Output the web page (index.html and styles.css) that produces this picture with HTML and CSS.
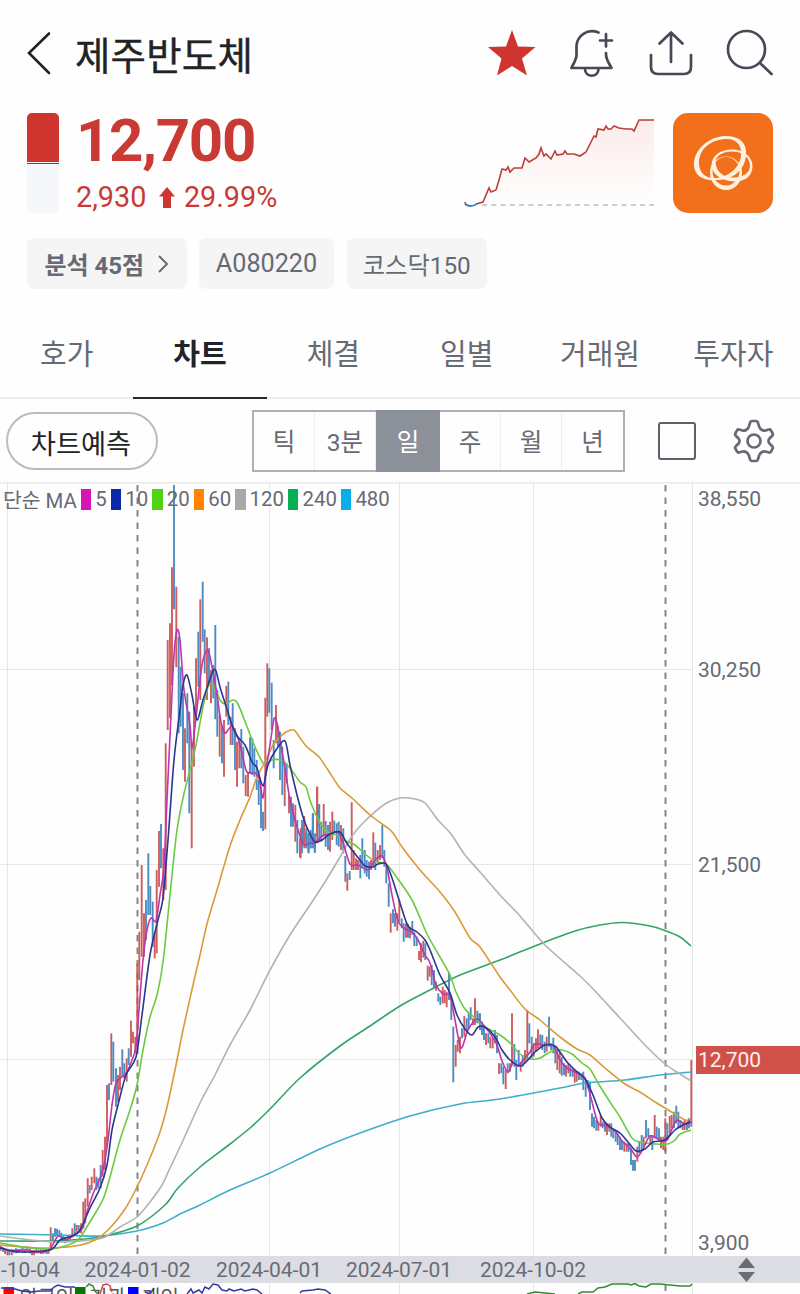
FILE: index.html
```html
<!DOCTYPE html>
<html lang="ko">
<head>
    <meta charset="UTF-8">
    <meta name="viewport" content="width=device-width, initial-scale=1.0">
    <title>제주반도체</title>
    <link rel="stylesheet" href="styles.css">
</head>
<body>
    <header class="topbar">
        <svg class="back" width="24" height="44" viewBox="0 0 24 44"><path d="M22 2.500 2 22 22 42"/></svg>
        <h1>제주반도체</h1>
        <svg class="star" width="50" height="48" viewBox="0 0 50 48"><path d="M25 1 31 17.500 48.500 18 35 29.500 40 46.500 25 37 10 46.500 14.500 29.500 1 18 19 17.500Z"/></svg>
        <svg class="icon bell" width="46" height="50" viewBox="0 0 46 50">
            <path d="M29.500 4.500C18 0 8 8 7.500 18V27C7.500 32 4 36 2.500 40H42.500C40.500 36 37 32 37 26V25"/>
            <path d="M16 41C16 50 29.500 50 29.500 41M37 6V18.500M31 12.500H43"/>
        </svg>
        <svg class="icon" width="44" height="48" viewBox="0 0 44 48">
            <path d="M2 26V38Q2 45 9 45H35Q42 45 42 38V26M22 33V4M10.500 14.500 22 3.500 33.500 14.500"/>
        </svg>
        <svg class="icon search" width="48" height="48" viewBox="0 0 48 48"><circle cx="20.500" cy="20.500" r="18.500"/><path d="M34 34 45.500 45"/></svg>
    </header>

    <section class="quote">
        <div class="day-range"><div class="up"></div></div>
        <div class="price">
            <strong>12,700</strong>
            <p><span>2,930</span><svg width="16" height="21" viewBox="0 0 16 21"><path d="M8 0 16 9.500H12V21H4V9.500H0Z"/></svg><span>29.99%</span></p>
        </div>
        <svg class="mini" width="190" height="92" viewBox="464 118 190 92">
            <defs>
                <linearGradient id="fade" x1="0" y1="0" x2="0" y2="1">
                    <stop offset="0" stop-color="#fbecea"/>
                    <stop offset="1" stop-color="#fefefe"/>
                </linearGradient>
            </defs>
            <path fill="url(#fade)" d="M482 203 489 189 496 190 503 168 522 168 525 159 540 150 547 156 560 153 585 154 594 136 600 128 634 129 640 120H654V204H482Z"/>
            <path class="base" d="M482 205H654"/>
            <path class="rise" d="M465 202 466 205 M476 204 483 202 486 195 489 188 491 192 496 190 499 180 502 169 506 170 508 167 510 172 514 168 522 168 525 158 529 162 536 158 539 154 541 148 544 156 546 154 551 159 555 151 557 155 563 154 565 151 567 154 574 154 580 156 586 152 590 144 594 136 596 137 598 129 604 130 606 126 608 129 611 129 614 126 619 128 626 129 632 129 634 131 639 120 654 120"/>
            <path class="fall" d="M465 204Q470 208 477 204"/>
        </svg>
        <div class="logo">
            <svg width="60" height="56" viewBox="0 0 60 56">
                <path fill-rule="evenodd" d="M1 31C0 15 15 2 32 1C47 1 54 8 53 20C52 35 40 45 24 45C10 46 2 41 1 31ZM6 28C6 39 14 44 24 43C36 41 47 33 48 20C49 11 44 4 34 4C19 4 6 13 6 28Z"/>
                <path fill-rule="evenodd" d="M18.500 30C19 20 28 14.500 39 14.500C51 14.500 59.500 22 59.500 31C59.500 42 51 46.500 41 46.500C29 46 18.500 39 18.500 30ZM22.500 27C23 37 31 43 41 42.500C50 42 57 38 57 31C57 22 49 16.500 39 16.500C30 16.500 22.500 21 22.500 27Z"/>
                <path fill-rule="evenodd" d="M17 38A16 16.500 0 0 1 49 38A16 17 0 0 1 17 38ZM19.500 36A13.500 14.500 0 0 0 46.500 36A13.500 14 0 0 0 19.500 36Z"/>
            </svg>
        </div>
    </section>

    <div class="chips">
        <a class="chip score">분석 45점<svg width="12" height="18" viewBox="0 0 12 18"><path d="M2 1 10 9 2 17"/></svg></a>
        <span class="chip code">A080220</span>
        <span class="chip index">코스닥150</span>
    </div>

    <nav class="tabs">
        <a>호가</a>
        <a class="on">차트</a>
        <a>체결</a>
        <a>일별</a>
        <a>거래원</a>
        <a>투자자</a>
    </nav>

    <div class="toolbar">
        <button class="forecast">차트예측</button>
        <div class="period">
            <span>틱</span>
            <span>3분</span>
            <span class="on">일</span>
            <span>주</span>
            <span>월</span>
            <span>년</span>
        </div>
        <div class="square"></div>
        <svg class="gear" width="42" height="44" viewBox="0 0 42 44">
            <path d="M17.300 3Q17.800 2 18.800 2H23.200Q24.200 2 24.700 3L26.300 8Q27 9.800 29 11Q30.700 12 32.500 11.500L36 10.500Q37.200 10.200 37.800 11.200L39.700 14.500Q40.200 15.500 39.400 16.500L36.500 19.500Q35.500 20.500 35.500 22Q35.500 23.500 36.500 24.500L39.400 27.500Q40.200 28.500 39.700 29.500L37.800 32.800Q37.200 33.800 36 33.500L32.500 32.500Q30.700 32 29 33Q27 34.200 26.300 36L24.700 41Q24.200 42 23.200 42H18.800Q17.800 42 17.300 41L15.700 36Q15 34.200 13 33Q11.300 32 9.500 32.500L6 33.500Q4.800 33.800 4.200 32.800L2.300 29.500Q1.800 28.500 2.600 27.500L5.500 24.500Q6.500 23.500 6.500 22Q6.500 20.500 5.500 19.500L2.600 16.500Q1.800 15.500 2.300 14.500L4.200 11.200Q4.800 10.200 6 10.500L9.500 11.500Q11.300 12 13 11Q15 9.800 15.700 8Z"/>
            <circle cx="21" cy="22" r="6.500"/>
        </svg>
    </div>

    <main class="chart">
        <svg width="800" height="772" viewBox="0 484 800 772">
            <path class="grid" d="M7.500 484V1256M269.500 484V1256M399.500 484V1256M533.500 484V1256M692.500 484V1256M0 669.500H692M0 864.500H692M0 1059.500H692"/>
            <path class="year" d="M137.500 485V1256M665.500 485V1256"/>
            <g id="candles"></g>
            <g id="averages"></g>
            <g class="scale">
                <text x="698" y="506">38,550</text>
                <text x="698" y="677">30,250</text>
                <text x="698" y="872">21,500</text>
                <text x="698" y="1249.500">3,900</text>
                <rect x="696" y="1046" width="104" height="28"/>
                <text class="now" x="698" y="1067">12,700</text>
            </g>
        </svg>
        <div class="legend">
            <span>단순 MA</span>
            <i class="ma5"></i><span>5</span>
            <i class="ma10"></i><span>10</span>
            <i class="ma20"></i><span>20</span>
            <i class="ma60"></i><span>60</span>
            <i class="ma120"></i><span>120</span>
            <i class="ma240"></i><span>240</span>
            <i class="ma480"></i><span>480</span>
        </div>
    </main>

    <svg class="dates" width="800" height="27" viewBox="0 1256 800 27">
        <text x="1" y="1276.500">-10-04</text>
        <text x="84.500" y="1276.500">2024-01-02</text>
        <text x="216" y="1276.500">2024-04-01</text>
        <text x="346" y="1276.500">2024-07-01</text>
        <text x="480" y="1276.500">2024-10-02</text>
        <path d="M738 1268 746.500 1257.500 755 1268ZM738 1272H755L746.500 1282Z"/>
    </svg>

    <!-- 투자자별 순매수: only the top edge fits on the first screen -->
    <svg class="investors" width="800" height="11" viewBox="0 1283 800 11">
        <path class="grid" d="M7.500 1283V1294M269.500 1283V1294M399.500 1283V1294M533.500 1283V1294M692.500 1283V1294"/>
        <path class="year" d="M665.500 1285V1291"/>
        <rect x="3.500" y="1287" width="10.500" height="20" fill="#ff0000"/>
        <text x="19" y="1305">외국인</text>
        <rect x="75" y="1287" width="10.500" height="20" fill="#007a00"/>
        <text x="89" y="1305">기관</text>
        <rect x="128" y="1287" width="10.500" height="20" fill="#0000ff"/>
        <text x="142" y="1305">개인</text>
        <path class="person" d="M1 1288 8 1288 15 1289 22 1291 30 1292 40 1291 50 1291 54 1287 58 1285 65 1287 75 1287M187 1294 191 1289 193 1293 199 1290 202 1293 205 1287 209 1289 213 1284 218 1285 222 1290 227 1291 229 1289 234 1291 241 1289 245 1291 253 1289 257 1290 262 1294M300 1293 302 1291 313 1290 318 1289 325 1290 331 1294M145 1292 150 1294 154 1288"/>
        <path class="organ" d="M86 1287 89 1284 93 1286 95 1291 98 1294M527 1294 535 1292 555 1294M578 1294 582 1292 593 1292 598 1288 605 1287 612 1284 628 1284 631 1285 635 1283.500 639 1286 646 1287 651 1284 660 1284 680 1286 690 1286 692 1284"/>
        <path class="foreign" d="M100 1294 103 1285 107 1284 110 1286 112 1292"/>
    </svg>

    <script src="chart.js"></script>
</body>
</html>
```
FILE: chart.js
```js
var NS = 'http://www.w3.org/2000/svg';

// Daily bars in blocks. Each bar: r (up) or b (down), x, high, low
// in thirds of a pixel from the block's origin
var blocks = [
    { x: 0, y: 840, bars: 'r2 1218 1232,b9 1222 1236,r15 1226 1242,r22 1229 1246,b28 1230 1246,r35 1228 1246,b41 1228 1240,b48 1225 1240,b54 1227 1238,b61 1226 1236,b68 1222 1234,r75 1226 1235,b82 1218 1232,b90 1226 1240,r96 1232 1246,r102 1230 1246,b109 1226 1240,r115 1229 1240,b122 1228 1242,r128 1230 1242,r134 1229 1240,b140 1233 1242,r146 1228 1241,r152 1162 1230,b159 1180 1200,b165 1165 1190,b171 1166 1187,b178 1170 1190,b184 1178 1196,b190 1188 1206,b196 1190 1210,b203 1188 1202,r210 1184 1198,r217 1165 1192,b224 1150 1182,r230 1155 1175,b236 1155 1170,r243 1150 1180,r250 1085 1165,r256 1075 1150,r263 1015 1100,b269 1035 1060,r275 1010 1050,r283 985 1030,b289 1010 1050,b295 1015 1045,b302 975 1045,r308 930 1010,r315 890 990,r321 735 920,b327 730 780,r334 580 735,b340 605 725,b348 685 800,r354 705 785,r360 680 750,b367 628 710,b373 670 715,r380 655 725,b386 625 675,r393 542 650,r399 575 610,r406 590 640,r412 370 620,r418 275 420,r425 75 350,r432 220 350,b438 180 300,b445 40 225,b451 138 225,b458 185 320,r464 280 355,r470 90 340,r477 -27 140,b483 -48 85,r490 25 180' },
    { x: 120, y: 530, bars: 'r137 640 1080,r143 330 600,r150 280 565,r156 112 465,b162 -135 238,r169 170 412,b176 320 610,b182 410 590,b189 490 720,r195 595 755,b202 490 640,b208 545 850,r215 640 955,r222 530 710,r228 385 565,b235 305 470,r241 208 510,b248 155 335,b254 298 430,r261 322 510,b267 355 460,r273 420 520,b280 405 505,b286 285 568,b292 480 620,r299 555 680,b306 590 700,r312 570 740,r319 468 560,b325 455 585,r332 560 645,b338 520 645,b345 595 720,r351 635 770,r358 630 715,b364 597 715,b370 650 760,r377 735 798,r384 725 800,b390 622 730,b397 625 735,b403 655 740,b410 690 780,b416 750 825,b423 770 895,b429 845 903,r436 503 898,r442 400 560,b448 415 548,b455 458 600,b461 630 715,r468 525 640,b474 590 650,b480 605 750,b487 650 795,r494 695 828,b500 700 760,r507 795 850,b513 800 890,b519 820 890,r526 825 935,b532 870 970,r540 925 982,b546 890 970,r552 858 940,b559 905 950,b565 910 968,b572 900 955,b578 850 940,b584 925 968,r591 770 920,b597 823 890' },
    { x: 300, y: 770, bars: 'r2 175 265,b6 150 230,r13 140 235,b19 175 235,b26 190 250,b32 185 235,b39 130 235,b45 190 248,r52 50 220,b58 103 210,b64 155 215,r71 102 200,b77 153 230,b84 165 240,r90 155 245,r97 125 210,b103 152 190,b110 160 225,b116 155 230,r123 165 240,b130 175 250,b136 258 335,r142 310 362,b149 303 330,r155 97 300,r161 240 300,r168 265 300,r174 270 300,b181 255 325,b187 205 295,b194 240 310,b200 270 320,b207 275 328,r213 270 300,r220 187 290,b226 218 300,r233 240 280,r240 225 270,b247 165 265,b253 240 290,b259 285 340,b266 340 410,r272 430 488,b279 418 460,b285 430 470,r292 430 482,r298 390 455,b305 445 475,b311 460 515,r318 460 503,b324 462 503,r330 470 505,b337 453 495,b343 485 528,b350 500 528,r357 543 570,r363 520 577,r370 513 563,b376 520 570,r383 587 632,r389 590 620,b395 585 645,b402 600 655,r408 635 662,b415 670 695,b421 680 705,r428 650 700,r434 660 700,r440 665 712,b447 607 690,b454 680 750,b460 770 937,r467 825 890,r473 810 845,r480 800 850,b486 775 805,r493 738 800,b500 745 780,b506 730 775,b512 712 750,r519 745 765,r525 685 765,b532 722 760,b538 730 760' },
    { x: 480, y: 900, bars: 'b0 340 390,b6 365 405,b12 380 420,r18 400 435,b25 400 430,r31 410 445,r38 415 445,b45 390 430,b51 405 460,r57 490 522,b64 490 520,b70 500 553,r77 510 567,b83 490 520,r90 490 515,r96 340 495,b103 432 500,b109 480 540,b116 450 500,r122 485 515,b128 465 500,r135 450 490,r142 330 480,b148 370 430,b155 410 475,r161 430 470,r168 415 455,r174 388 445,b181 403 440,b187 405 450,b194 425 460,r200 410 455,b207 350 440,b213 435 450,b220 413 460,b226 440 490,r232 450 510,r239 455 520,b245 470 527,b252 490 525,r258 495 530,r265 490 520,b271 500 530,b278 505 530,r284 510 548,r290 515 545,b297 515 540,b304 520 540,b310 515 570,b317 540 590,b323 540 565,b330 545 630,b336 640 680,b342 650 685,b349 660 692,r355 665 692,r362 647 680,b368 665 685,b375 665 695,r381 670 705,r388 670 695,b394 670 710,b400 690 715,b407 690 725,b413 700 735,b420 710 750,b426 720 750,r433 725 755,r440 730 755,b446 730 755,b453 745 795,b459 780 812,b465 780 812,r472 740 785,b478 725 760,b485 705 750,r491 710 740,b498 660 715,b505 685 710,r511 705 735,b517 705 750,r524 645 715,b530 680 715,b537 685 720,r543 710 745,r550 710 750,r556 655 755,b562 670 720,r569 648 700,r575 645 685,b582 635 685,b589 617 670,b595 635 685,b601 660 685,r608 665 690,r614 660 690,b621 665 690,b627 655 685,r634 480 680' }
];

// Moving averages, x,y points of the chart
var averages = {
    ma480: '0,1234 60,1235 100,1236 137,1231 163,1223 180,1214 200,1205 230,1190 270,1173 320,1149 360,1133 410,1116 460,1104 500,1099 560,1088 585,1083 625,1080 660,1075 691,1072',
    ma240: '0,1241 50,1241 85,1239 105,1236 137,1226 165,1205 178,1188 200,1167 230,1144 250,1128 270,1109 300,1078 340,1046 370,1026 400,1006 430,990 460,975 500,960 540,944 575,931 600,925 622,922.5 650,926 666,931 680,937 691,946',
    ma120: '0,1236 30,1240 60,1242 90,1240 105,1237 120,1227 137,1217 150,1202 162,1185 170,1168 180,1147 200,1103 215,1075 230,1045 250,1010 270,970 290,935 310,905 325,882 340,857 352,836 365,821 385,804 400,798 415,799 425,803 438,820 451,834 465,855 480,872 500,895 520,916 545,945 580,976 595,991 620,1018 645,1045 665,1064 680,1074 691,1081',
    ma60: '0,1245 40,1248 75,1246 95,1240 110,1228 125,1209 137,1187 150,1158 160,1132 167,1107 175,1070 183,1030 193,985 200,955 207,924 217,890 230,846 240,820 250,797 257,777 265,762 273,745 280,737 286,732 294,730 300,738 307,747 319,757 328,770 340,788 352,798 370,815 385,826 393,833 402,847 420,870 440,892 455,912 470,938 480,947 500,977 510,990 525,1009 540,1020 560,1037 577,1049 590,1055 605,1068 625,1084 640,1092 655,1102 670,1111 685,1120 691,1119',
    ma20: '0,1243 30,1248 50,1249 65,1246 78,1240 88,1225 96,1212 104,1197 110,1177 120,1140 130,1110 137,1085 143,1050 150,1017 157,995 163,962 168,915 172,875 177,830 183,798 190,770 196,745 203,707 209,685 215,688 220,700 225,704 233,700 238,704 246,724 255,747 264,764 272,760 280,760 290,768 300,782 306,787 311,803 320,823 328,832 340,836 346,841 355,845 365,854 375,861 386,864 395,875 412,900 427,934 440,957 450,975 456,992 465,1009 475,1018 485,1027 500,1035 510,1043 520,1054 530,1059 540,1058 552,1051 562,1050 572,1054 582,1063 590,1069 598,1083 610,1102 620,1117 632,1138 640,1142 655,1144 668,1144 675,1140 680,1134 691,1130',
    ma5: '0,1247 10,1251 25,1250 40,1252 50,1249 58,1236 65,1240 73,1236 82,1229 87,1212 93,1194 100,1178 104,1165 108,1140 112,1105 116,1083 122,1077 127,1072 132,1060 136,1047 139,1010 143,960 147,930 151,918 156,921 160,895 164,867 167,800 171,715 174,655 177,630 180,640 184,690 190,725 192,748 196,718 200,680 203,660 208,650 213,672 217,695 221,722 225,733 228,730 232,726 236,733 240,745 246,770 250,773 255,773 259,778 263,798 266,770 270,745 274,719 277,723 281,745 286,775 290,800 295,820 300,836 304,845 310,843 315,843 322,836 330,834 338,832 343,842 350,864 358,865 368,870 375,860 382,856 387,868 392,895 398,921 405,929 412,932 418,940 425,955 430,963 436,985 443,994 450,996 455,1020 461,1048 468,1030 477,1019 485,1027 492,1036 497,1045 502,1061 508,1072 513,1063 518,1066 525,1058 530,1052 535,1044 545,1045 553,1045 560,1060 567,1068 577,1073 585,1078 591,1098 598,1123 605,1125 615,1131 622,1141 630,1148 637,1157 643,1149 650,1136 660,1140 667,1140 672,1129 677,1120 685,1124 690,1120',
    ma10: '0,1248 20,1252 50,1250 60,1240 72,1236 80,1230 90,1208 100,1188 107,1165 112,1130 118,1105 126,1075 136,1057 142,1015 150,955 158,920 163,898 168,840 174,760 180,710 183,685 187,675 192,695 197,720 203,700 208,685 213,671 216,671 220,687 225,703 232,725 237,736 245,745 252,762 257,768 263,786 268,765 276,750 285,741 290,765 297,795 304,820 310,834 315,842 322,840 330,834 340,832 346,842 352,850 360,860 365,866 373,867 378,864 386,864 392,878 400,903 408,926 417,932 425,940 430,950 440,975 450,993 457,1015 465,1029 472,1035 478,1027 485,1027 495,1037 502,1050 510,1060 520,1066 526,1062 535,1052 545,1045 555,1046 560,1052 567,1062 575,1070 585,1079 593,1095 602,1118 610,1127 620,1133 628,1142 636,1151 645,1149 653,1142 665,1140 675,1130 683,1125 691,1122'
};

function addPath(parent, className, d) {
    var path = document.createElementNS(NS, 'path');
    path.setAttribute('class', className);
    path.setAttribute('d', d);
    document.getElementById(parent).appendChild(path);
}

blocks.forEach(function (block) {
    block.bars.split(',').forEach(function (bar) {
        var n = bar.slice(1).split(' ');
        var x = (block.x + n[0] / 3).toFixed(1);
        addPath('candles', bar[0] === 'r' ? 'up' : 'down',
            'M' + x + ' ' + (block.y + n[1] / 3).toFixed(1) + 'V' + (block.y + n[2] / 3).toFixed(1));
    });
});

// Smooth curve through all points
function curve(text) {
    var p = text.split(' ').map(function (s) { return s.split(',').map(Number); });
    var d = 'M' + p[0];
    for (var i = 0; i < p.length - 1; i++) {
        var a = p[i - 1] || p[i], b = p[i], c = p[i + 1], e = p[i + 2] || c;
        d += 'C' + (b[0] + (c[0] - a[0]) / 7) + ' ' + (b[1] + (c[1] - a[1]) / 7) + ' ' +
            (c[0] - (e[0] - b[0]) / 7) + ' ' + (c[1] - (e[1] - b[1]) / 7) + ' ' + c[0] + ' ' + c[1];
    }
    return d;
}

for (var name in averages) {
    addPath('averages', name, curve(averages[name]));
}
```
FILE: styles.css
```css
* {
    box-sizing: border-box;
}
body {
    margin: 0;
    width: 800px;
    height: 1294px;
    overflow: hidden;
    background-color: #fefefe;
    color: #666a73;
    font-family: Roboto, "Noto Sans CJK KR", sans-serif;
}
svg {
    display: block;
    flex: none;
}
h1, p {
    margin: 0;
}
.topbar {
    display: flex;
    align-items: center;
    height: 106px;
    padding: 0 26px 0 27px;
}
.topbar h1 {
    flex: 1;
    margin-left: 24px;
    padding-top: 8px;
    color: #222326;
    font-size: 38.5px;
    font-weight: 400;
    line-height: 60px;
    letter-spacing: 0.2px;
    -webkit-text-stroke: 0.4px #222326;
}
.back path {
    fill: none;
    stroke: #222326;
    stroke-width: 2.6;
    stroke-linecap: round;
}
.star {
    fill: #d0342f;
}
.icon {
    fill: none;
    stroke: #454a56;
    stroke-width: 2.7;
    stroke-linecap: round;
    stroke-linejoin: round;
    margin-left: 34px;
}
.bell {
    margin-left: 32px;
}
.search {
    margin-left: 33px;
}
.quote {
    display: flex;
    height: 108px;
    padding: 7px 27.5px 0 27px;
}
.day-range {
    width: 32px;
    height: 100px;
    border-radius: 5px;
    overflow: hidden;
    background-color: #f5f7fb;
}
.day-range .up {
    height: 51px;
    background: linear-gradient(#d0342f 49px, #fff 49px, #fff 50px, #a03034 50px);
}
.price {
    margin-left: 17px;
    width: 240px;
    color: #c93a34;
}
.price strong {
    display: block;
    margin-top: -2px;
    font-size: 60px;
    line-height: 60px;
    letter-spacing: -1.3px;
}
.price p {
    display: flex;
    align-items: center;
    margin-top: 8px;
    font-size: 28.8px;
    line-height: 36px;
}
.price p svg {
    margin: 0 8.5px 0 13px;
    fill: #d0342f;
}
.mini {
    margin: 5px 18.500px 0 auto;
    fill: none;
}
.base {
    stroke: #bcbcbc;
    stroke-width: 1.5;
    stroke-dasharray: 5 4.3;
}
.rise {
    stroke: #b8403c;
    stroke-width: 1.6;
}
.fall {
    stroke: #3d80c4;
    stroke-width: 2;
}
.logo {
    display: flex;
    align-items: center;
    justify-content: center;
    width: 100px;
    height: 100px;
    border-radius: 15px;
    background-color: #f2701b;
    fill: #fff1df;
}
.chips {
    display: flex;
    gap: 12.5px;
    padding: 24px 27px 0;
    height: 97px;
}
.chip {
    display: flex;
    align-items: center;
    justify-content: center;
    height: 51px;
    border-radius: 7px;
    background-color: #f5f5f5;
    font-size: 25.2px;
}
.score {
    width: 159.5px;
    gap: 13px;
    font-size: 24px;
    font-weight: 700;
}
.score svg {
    fill: none;
    stroke: #666a73;
    stroke-width: 2;
}
.code {
    width: 135px;
}
.index {
    width: 140.5px;
    font-size: 24.3px;
}
.tabs {
    display: flex;
    height: 88px;
    border-bottom: 2px solid #eceeef;
}
.tabs a {
    flex: 1;
    height: 88px;
    text-align: center;
    font-size: 29px;
    line-height: 89px;
}
.tabs .on {
    color: #222326;
    font-weight: 700;
    border-bottom: 2px solid #28292d;
}
.toolbar {
    display: flex;
    align-items: center;
    height: 85px;
    padding: 0 25px 0 6px;
    border-bottom: 2px solid #eceeef;
}
.forecast {
    width: 152px;
    height: 58px;
    padding: 2px 2px 0 0;
    border: 2px solid #bbbcbd;
    border-radius: 29px;
    background: none;
    color: #222326;
    font: 27.3px "Noto Sans CJK KR", sans-serif;
}
.period {
    display: flex;
    width: 373px;
    height: 62px;
    margin-left: 94px;
    border: 2px solid #aeb0b2;
}
.period span {
    width: 61px;
    border-right: 1px solid #eceeef;
    font-size: 24.5px;
    line-height: 62px;
    text-align: center;
}
.period span:last-child {
    border: 0;
}
.period .on {
    width: 64px;
    margin: -2px 0;
    line-height: 66px;
    background-color: #8c9099;
    border: 0;
    color: #fff;
}
.square {
    width: 38px;
    height: 38px;
    margin-left: 33px;
    border: 2.5px solid #5d616b;
    border-radius: 3px;
}
.gear {
    margin-left: 37px;
    fill: none;
    stroke: #666a73;
    stroke-width: 2.7;
}
.chart {
    position: relative;
    height: 772px;
}
.legend {
    position: absolute;
    top: 2px;
    left: 3px;
    display: flex;
    gap: 4px;
    align-items: center;
    height: 26px;
    font-size: 20.4px;
}
.legend i {
    width: 10.5px;
    height: 21px;
}
.ma5 { background-color: #d914b4; stroke: #bf35ad; }
.ma10 { background-color: #0b28a9; stroke: #28388f; }
.ma20 { background-color: #51d313; stroke: #6cc943; }
.ma60 { background-color: #ff8500; stroke: #dc9a36; }
.ma120 { background-color: #a9a9a9; stroke: #b3b3b3; }
.ma240 { background-color: #05b052; stroke: #31a467; }
.ma480 { background-color: #08aeea; stroke: #3eaecb; }
#averages {
    fill: none;
    stroke-width: 1.6;
}
#candles {
    stroke-width: 1.9;
    opacity: 0.92;
}
.up {
    stroke: #cc4f4f;
}
.down {
    stroke: #3f83bf;
}
.grid {
    stroke: #e5e7e7;
    stroke-width: 1;
}
.year {
    stroke: #868686;
    stroke-width: 2;
    stroke-dasharray: 6.5 6;
}
.scale {
    fill: #666a73;
    font-size: 21px;
}
.scale rect {
    fill: #d0504a;
}
.scale .now {
    fill: #fff0ee;
}
.dates {
    background-color: #dcdde3;
    fill: #686c76;
    font-size: 21px;
}
.investors {
    fill: #555;
    font-size: 20px;
}
.investors path {
    fill: none;
}
.person {
    stroke: #3538a0;
    stroke-width: 1.5;
}
.organ {
    stroke: #338a33;
    stroke-width: 1.5;
}
.foreign {
    stroke: #d64545;
    stroke-width: 1.5;
}
```
